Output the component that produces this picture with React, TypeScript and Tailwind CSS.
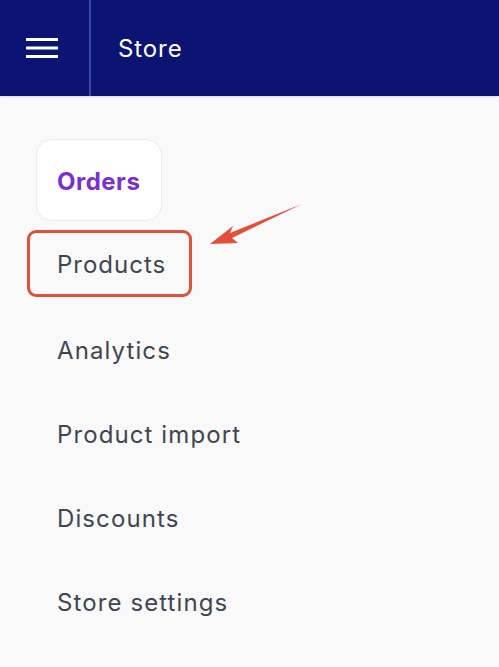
const items = ['Analytics', 'Product import', 'Discounts', 'Store settings'];

export default function App() {
  return (
    <div className="h-[667px] w-[499px] bg-[#f9f9f9] overflow-hidden relative" style={{ fontFamily: 'Inter, "Noto Sans", sans-serif' }}>
      {/* Header */}
      <div className="h-24 bg-[#0b1470] flex items-stretch shadow-[0_1px_2px_rgba(0,0,0,0.12)]">
        <div className="w-[91px] flex items-center pl-[26px] border-r-2 border-[#3c4aa6]">
          <svg width="32" height="22" viewBox="0 0 32 22">
            <rect x="0" y="1" width="32" height="3" fill="#fff" />
            <rect x="0" y="9.5" width="32" height="3" fill="#fff" />
            <rect x="0" y="18" width="32" height="3" fill="#fff" />
          </svg>
        </div>
        <div className="flex items-center pl-[27px] pt-[2px] text-white text-[24px] tracking-[0.9px]">Store</div>
      </div>

      {/* Menu */}
      <div className="flex flex-col pt-[43px]">
        <div className="ml-9 w-[126px] h-[82px] bg-white rounded-2xl border border-[#ececec] flex items-center pl-5 pt-[3px] text-[24px] font-bold tracking-[0.5px] text-[#7b2fce]">
          Orders
        </div>
        <div className="ml-[27px] mt-[9px] w-[165px] h-[67px] rounded-[9px] border-[3px] border-[#e0513b] flex items-center pl-[27px] pt-[3px] text-[24px] tracking-[1px] text-[#3f4651]">
          Products
        </div>
        <div className="flex flex-col mt-[11px]">
          {items.map((t) => (
            <div key={t} className="ml-[57px] h-[84px] flex items-center pt-[2px] text-[24px] tracking-[1.1px] text-[#3f4651]">
              {t}
            </div>
          ))}
        </div>
      </div>

      {/* Arrow annotation */}
      <svg className="absolute left-0 top-0" width="499" height="667" viewBox="0 0 499 667">
        <path d="M302 204 L230 233 L233 226 L210 244 L238 243 L232 238 Z" fill="#e24f3a" />
      </svg>
    </div>
  );
}
